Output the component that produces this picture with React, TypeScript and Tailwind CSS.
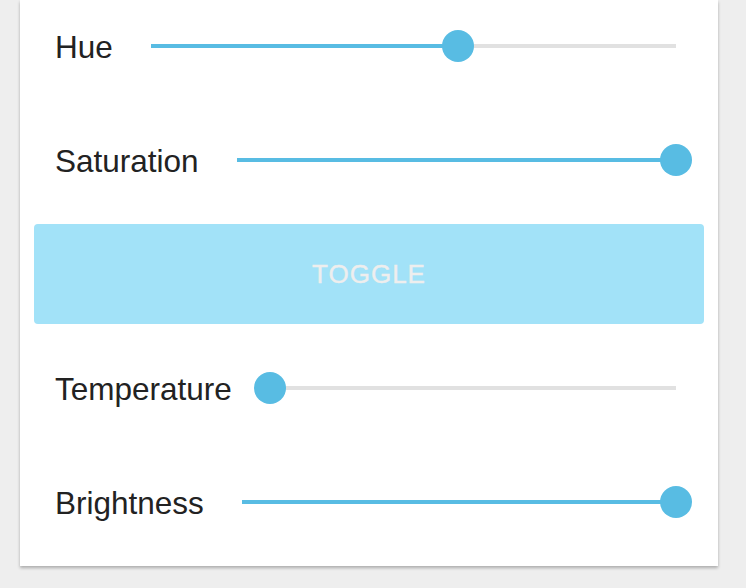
import { useState } from 'react';

type SliderRowProps = {
  label: string;
  value: number;
  onChange: (v: number) => void;
  className?: string;
};

function SliderRow({ label, value, onChange, className = '' }: SliderRowProps) {
  return (
    <div className={`flex h-[92px] items-center pl-[21px] pr-[28px] ${className}`}>
      <span className="mr-[38px] mt-[3px] text-[31.5px] leading-none text-[#222222]">{label}</span>
      <div
        className="relative h-[4px] flex-1 cursor-pointer bg-[#e1e1e1]"
        onClick={(e) => {
          const r = e.currentTarget.getBoundingClientRect();
          onChange(Math.min(1, Math.max(0, (e.clientX - r.left) / r.width)));
        }}
      >
        <div className="absolute left-0 top-0 h-full bg-[#58bce3]" style={{ width: `${value * 100}%` }} />
        <div
          className="absolute top-1/2 h-[32px] w-[32px] -translate-x-1/2 -translate-y-1/2 rounded-full bg-[#58bce3]"
          style={{ left: `${value * 100}%` }}
        />
      </div>
    </div>
  );
}

export default function App() {
  const [hue, setHue] = useState(0.584);
  const [saturation, setSaturation] = useState(1);
  const [temperature, setTemperature] = useState(0);
  const [brightness, setBrightness] = useState(1);
  const [on, setOn] = useState(false);

  return (
    <div className="min-h-screen bg-[#eeeeee] font-['Liberation_Sans',Arial,sans-serif]">
      <div className="ml-[20px] w-[698px] bg-white px-[14px] pb-[18px] shadow-[0_2px_3px_rgba(0,0,0,0.28)]">
        <SliderRow label="Hue" value={hue} onChange={setHue} />
        <SliderRow label="Saturation" value={saturation} onChange={setSaturation} className="mt-[22px]" />

        <button
          onClick={() => setOn(!on)}
          className="mt-[18px] flex h-[100px] w-full items-center justify-center rounded-[4px] bg-[#a2e2f8] text-[26px] tracking-[1px] text-[#eeeeee] [-webkit-text-stroke:0.4px_#eeeeee]"
        >
          TOGGLE
        </button>

        <SliderRow label="Temperature" value={temperature} onChange={setTemperature} className="mt-[18px]" />
        <SliderRow label="Brightness" value={brightness} onChange={setBrightness} className="mt-[22px]" />
      </div>
    </div>
  );
}
